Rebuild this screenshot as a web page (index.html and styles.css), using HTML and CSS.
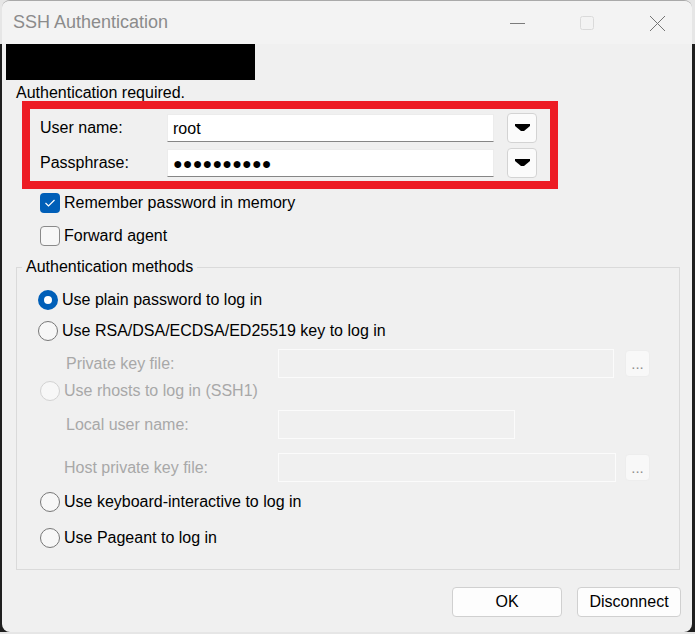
FILE: index.html
```html
<!DOCTYPE html>
<html lang="en">
<head>
    <meta charset="UTF-8">
    <title>SSH Authentication</title>
    <link rel="stylesheet" href="styles.css">
</head>
<body>
    <div class="window">
        <div class="titlebar">
            <span class="title">SSH Authentication</span>
            <div class="caption">
                <span class="cap"><svg width="16" height="16"><path d="M1 8.5h15" stroke="#7b7b7b"/></svg></span>
                <span class="cap"><svg width="16" height="16"><rect x="1.5" y="1.5" width="13" height="13" rx="2" fill="none" stroke="#dadada"/></svg></span>
                <span class="cap"><svg width="16" height="16"><path d="M1 1l15 15M16 1L1 16" stroke="#747474"/></svg></span>
            </div>
        </div>

        <div class="redacted"></div>
        <p class="status">Authentication required.</p>

        <div class="login-box">
            <label class="lbl">User name:</label>
            <div class="field">root</div>
            <button class="drop"><svg width="15" height="8"><path d="M0 0H15V2L9 7H6L0 2Z"/></svg></button>
            <label class="lbl">Passphrase:</label>
            <div class="field secret">●●●●●●●●●●</div>
            <button class="drop"><svg width="15" height="8"><path d="M0 0H15V2L9 7H6L0 2Z"/></svg></button>
        </div>

        <div class="checks">
            <div class="opt"><span class="box checked"><svg width="20" height="20"><path d="M5.5 10l3 3 6-6" fill="none" stroke="#fff" stroke-width="1.2"/></svg></span>Remember password in memory</div>
            <div class="opt"><span class="box"></span>Forward agent</div>
        </div>

        <fieldset class="methods">
            <legend>Authentication methods</legend>
            <div class="opt"><span class="radio on"></span>Use plain password to log in</div>
            <div class="opt sp-11"><span class="radio"></span>Use RSA/DSA/ECDSA/ED25519 key to log in</div>
            <div class="sub sp-8">
                <span class="sub-lbl">Private key file:</span>
                <div class="path wide"></div>
                <button class="browse">...</button>
            </div>
            <div class="opt off inset sp-3"><span class="radio"></span>Use rhosts to log in (SSH1)</div>
            <div class="sub sp-9">
                <span class="sub-lbl">Local user name:</span>
                <div class="path short"></div>
            </div>
            <div class="sub sp-14">
                <span class="sub-lbl host">Host private key file:</span>
                <div class="path wider"></div>
                <button class="browse">...</button>
            </div>
            <div class="opt inset sp-10"><span class="radio"></span>Use keyboard-interactive to log in</div>
            <div class="opt inset sp-16"><span class="radio"></span>Use Pageant to log in</div>
        </fieldset>

        <div class="actions">
            <button class="btn ok">OK</button>
            <button class="btn">Disconnect</button>
        </div>
    </div>
</body>
</html>
```

FILE: styles.css
```css
body {
    margin: 0;
    background: linear-gradient(#e6e6e6 0 44px, #1f1f1f 44px);
    font-family: "Liberation Sans", Arial, sans-serif;
    font-size: 16px;
    color: #000;
}
.window {
    margin-left: 2px;
    width: 690px;
    height: 631px;
    background: #f0f0f0;
    border-top: 1px solid #a9a9a9;
    border-radius: 8px;
    overflow: hidden;
}
.titlebar {
    height: 43px;
    background: #f3f3f3;
    display: flex;
    align-items: center;
}
.title {
    padding-left: 11px;
    font-size: 18px;
    color: #8b8b8b;
    flex: 1;
}
.caption {
    display: flex;
}
.cap {
    width: 70px;
    height: 43px;
    display: flex;
    align-items: center;
    justify-content: center;
}
.redacted {
    margin-left: 4px;
    width: 249px;
    height: 36px;
    background: #000;
}
.status {
    margin: 0;
    padding: 4px 0 0 14px;
    height: 17px;
    line-height: 17px;
}

/* red framed user / passphrase block */
.login-box {
    margin-left: 20px;
    width: 520px;
    border: 8px solid #ed1c24;
    padding: 4px 0 3px;
    display: grid;
    grid-template-columns: 124px 327px 30px;
    grid-template-rows: 30px 30px;
    column-gap: 13px;
    row-gap: 5px;
    align-items: center;
}
.lbl {
    padding-left: 10px;
}
.field {
    height: 28px;
    line-height: 27px;
    box-sizing: border-box;
    background: #fff;
    border: 1px solid #ececec;
    border-bottom-color: #868686;
    padding-left: 5px;
}
.secret {
    font-size: 16px;
    letter-spacing: 0.2px;
}
.drop {
    width: 30px;
    height: 30px;
    padding: 0;
    border: 1px solid #d3d3d3;
    border-radius: 4px;
    background: #fbfbfb;
    display: flex;
    align-items: center;
    justify-content: center;
}

.checks {
    margin-top: 4px;
    padding-left: 38px;
    display: flex;
    flex-direction: column;
    gap: 13px;
}
.opt {
    height: 20px;
    display: flex;
    align-items: center;
    gap: 4px;
}
.box {
    width: 20px;
    height: 20px;
    box-sizing: border-box;
    border: 1px solid #8a8a8a;
    border-radius: 4px;
    background: #f7f7f7;
}
.box.checked {
    border: none;
    background: #005fb8;
}
.box svg {
    display: block;
}

/* authentication methods group */
.methods {
    margin: 11px 0 0 14px;
    padding: 13px 0 21px;
    width: 664px;
    box-sizing: border-box;
    border: 1px solid #dadada;
    min-inline-size: 0;
}
.methods legend {
    margin-left: 5px;
    padding: 0 4px;
    line-height: 20px;
}
.methods > .opt {
    margin-left: 21px;
}
.methods > .opt.inset {
    margin-left: 23px;
}
.radio {
    width: 20px;
    height: 20px;
    box-sizing: border-box;
    border: 1px solid #777;
    border-radius: 50%;
    background: #f7f7f7;
}
.radio.on {
    border: 6px solid #005fb8;
    background: #fff;
}
.off {
    color: #a8a8a8;
}
.off .radio {
    border-color: #d2d2d2;
}
.sub {
    height: 29px;
    display: flex;
    align-items: center;
    padding-left: 49px;
}
.sub-lbl {
    width: 212px;
    color: #a8a8a8;
}
.sub-lbl.host {
    margin-left: -2px;
    width: 214px;
}
.path {
    height: 29px;
    box-sizing: border-box;
    border: 1px solid #fbfbfb;
    background: #f0f0f0;
}
.wide { width: 336px; margin-right: 11px; }
.wider { width: 338px; margin-right: 9px; }
.short { width: 237px; }
.browse {
    width: 25px;
    height: 27px;
    padding: 0 0 4px;
    border: 1px solid #ededed;
    border-radius: 4px;
    background: #f8f8f8;
    color: #8f8f8f;
    font: inherit;
    font-size: 15px;
    display: flex;
    align-items: flex-end;
    justify-content: center;
}
.sp-3 { margin-top: 3px; }
.sp-8 { margin-top: 8px; }
.sp-9 { margin-top: 9px; }
.sp-10 { margin-top: 10px; }
.sp-11 { margin-top: 11px; }
.sp-14 { margin-top: 14px; }
.sp-16 { margin-top: 16px; }

.actions {
    margin-top: 17px;
    padding-right: 11px;
    display: flex;
    justify-content: flex-end;
    gap: 15px;
}
.btn {
    width: 104px;
    height: 30px;
    border: 1px solid #d0d0d0;
    border-radius: 4px;
    background: #fdfdfd;
    font: inherit;
    color: #000;
}
.btn.ok {
    width: 110px;
}
```
